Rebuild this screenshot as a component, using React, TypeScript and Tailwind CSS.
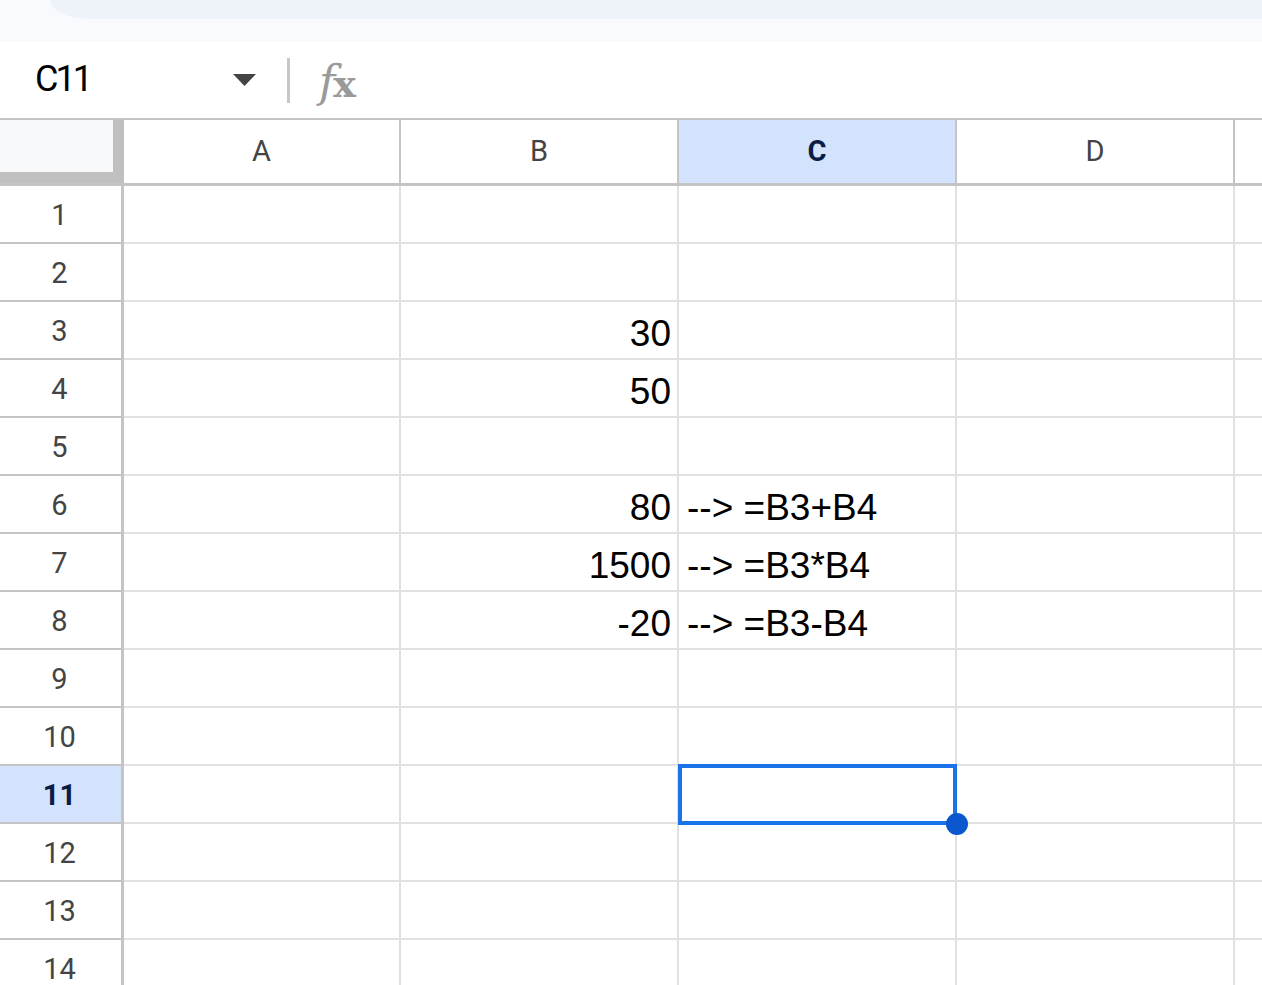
const columns = ["A", "B", "C", "D", ""];

type Row = { b?: string; c?: string };

const rows: Row[] = [
  {},
  {},
  { b: "30" },
  { b: "50" },
  {},
  { b: "80", c: "--> =B3+B4" },
  { b: "1500", c: "--> =B3*B4" },
  { b: "-20", c: "--> =B3-B4" },
  {},
  {},
  {},
  {},
  {},
  {},
];

const ACTIVE_ROW = 11;

const Toolbar = () => (
  <div className="h-[76px] shrink-0 flex items-center bg-white">
    <div className="w-[233px] pl-[35px] pb-[3px] text-[36px] tracking-[-3px] leading-none text-black font-['Roboto',sans-serif]">
      C11
    </div>
    <svg width="23" height="12" viewBox="0 0 23 12" className="mt-[-1px]">
      <path d="M0 0 L23 0 L11.5 12 Z" fill="#444" />
    </svg>
    <div className="w-[3px] h-[45px] bg-[#c7c7c7] ml-[31px]" />
    <div className="ml-[29px] mt-[4px] flex items-baseline text-[#9a9a9a] leading-none font-['DejaVu_Serif',serif]">
      <span className="italic text-[44px]">f</span>
      <span className="font-bold text-[38px] ml-[-2px]">x</span>
    </div>
  </div>
);

const HeaderRow = () => (
  <div className="flex h-[68px] shrink-0 border-t-2 border-b-[3px] border-[#c4c4c4] bg-white">
    <div className="w-[124px] shrink-0 bg-[#c0c0c0]">
      <div className="w-[113px] h-[52px] bg-[#f8f9fa]" />
    </div>
    {columns.map((col, i) => {
      const active = col === "C";
      return (
        <div
          key={i}
          className={`${i === 0 ? "w-[277px]" : "w-[278px]"} shrink-0 border-r-2 border-[#c4c4c4] flex items-center justify-center text-[29px] leading-none font-['Roboto',sans-serif] ${
            active ? "bg-[#d3e3fd] text-[#0b1d45] font-bold" : "text-[#444]"
          }`}
        >
          {col}
        </div>
      );
    })}
  </div>
);

const GridRow = ({ row, index }: { row: Row; index: number }) => {
  const n = index + 1;
  const active = n === ACTIVE_ROW;
  return (
    <div className="flex h-[58px] shrink-0">
      <div
        className={`w-[124px] shrink-0 border-r-[3px] border-b-2 border-[#c4c4c4] flex items-center justify-center pt-[3px] pr-[2px] text-[29px] leading-none font-['Roboto',sans-serif] ${
          active ? "bg-[#d3e3fd] text-[#0b1d45] font-bold" : "text-[#444]"
        }`}
      >
        {n}
      </div>
      <div className="w-[277px] shrink-0 border-r-2 border-b-2 border-[#e1e1e1]" />
      <div className="w-[278px] shrink-0 border-r-2 border-b-2 border-[#e1e1e1] flex items-end justify-end pr-[6px] pb-[6px] text-[37px] leading-none text-black font-['Liberation_Sans',Arial,sans-serif]">
        {row.b}
      </div>
      <div className="relative w-[278px] shrink-0 border-r-2 border-b-2 border-[#e1e1e1] flex items-end pl-[8px] pb-[6px] text-[37px] leading-none text-black whitespace-nowrap font-['Liberation_Sans',Arial,sans-serif]">
        {row.c}
        {active && (
          <>
            <div className="absolute z-10 left-[-1px] top-[-2px] w-[279px] h-[61px] border-4 border-[#1a73e8]" />
            <div className="absolute z-20 left-[267px] top-[47px] w-[22px] h-[22px] rounded-full bg-[#0b57d0]" />
          </>
        )}
      </div>
      <div className="w-[278px] shrink-0 border-r-2 border-b-2 border-[#e1e1e1]" />
      <div className="w-[278px] shrink-0 border-r-2 border-b-2 border-[#e1e1e1]" />
    </div>
  );
};

export default function App() {
  return (
    <div className="w-[1262px] h-[985px] overflow-hidden bg-white flex flex-col">
      <div className="h-[42px] shrink-0 bg-[#f8fafd] pl-[50px]">
        <div className="h-[19px] bg-[#eef2f9] rounded-bl-[40px_19px]" />
      </div>
      <Toolbar />
      <HeaderRow />
      {rows.map((row, i) => (
        <GridRow key={i} row={row} index={i} />
      ))}
    </div>
  );
}
